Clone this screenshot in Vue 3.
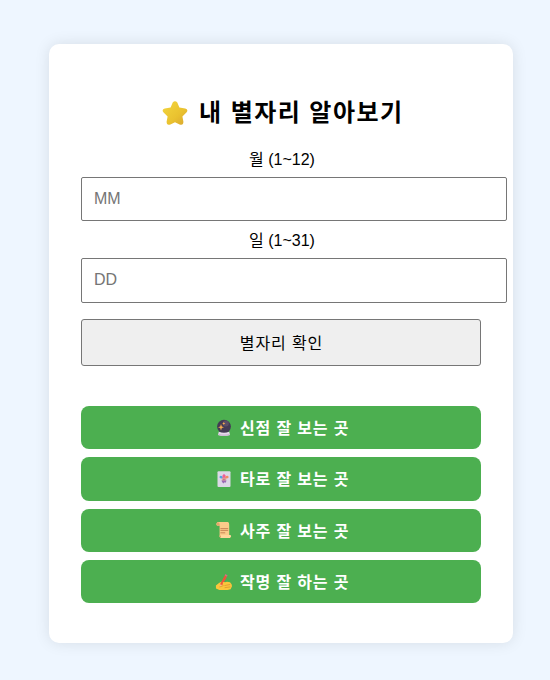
<template>
  <main class="page">
    <section class="card">
      <h2 class="title">
        <svg class="star" viewBox="0 0 26 26" aria-hidden="true">
          <defs>
            <linearGradient id="gold" x1="0" y1="0" x2="1" y2="1">
              <stop offset="0" stop-color="#f3d63f" />
              <stop offset="0.6" stop-color="#eac22f" />
              <stop offset="1" stop-color="#d8a52f" />
            </linearGradient>
          </defs>
          <path d="M10.7 2.6Q13 -.2 15.3 2.6L17.4 7.6L23.2 8.5Q26.8 9.6 24.4 12.6L20.4 16.4L21.4 21.8Q21.4 25.9 17.6 24.5L13 22.3L8.4 24.5Q4.6 25.9 4.6 21.8L5.6 16.4L1.6 12.6Q-.8 9.6 2.8 8.5L8.6 7.6Z" fill="url(#gold)" />
        </svg>
        <span>내 별자리 알아보기</span>
      </h2>

      <label class="label" for="month">월 (1~12)</label>
      <input id="month" v-model="month" class="field" type="text" placeholder="MM" />
      <label class="label second" for="day">일 (1~31)</label>
      <input id="day" v-model="day" class="field tall" type="text" placeholder="DD" />
      <button class="submit" type="button">별자리 확인</button>

      <nav class="links">
        <a v-for="item in links" :key="item.icon" class="link" href="#">
          <svg class="icon" viewBox="0 0 18 18" aria-hidden="true">
            <g v-if="item.icon === 'crystal'">
              <circle cx="9" cy="7.6" r="6.9" fill="#443b55" />
              <circle cx="10.8" cy="4.5" r="3" fill="#65576f" opacity=".7" />
              <path d="M3.8 12.8Q9 14.6 14.2 12.8L15 16Q9 17.8 3 16Z" fill="#e6d9ea" />
              <path d="M3.3 14.8Q9 16.4 14.7 14.8L15 16Q9 17.8 3 16Z" fill="#cfbdd6" />
              <path d="M6 5L6.8 7.5L9 8.2L6.8 8.9L6 11.6L5.2 8.9L3 8.2L5.2 7.5ZM8.8 3L9.3 4L10.4 4.5L9.3 5L8.8 6L8.3 5L7.2 4.5L8.3 4Z" fill="#f9ac4e" />
            </g>
            <g v-else-if="item.icon === 'joker'">
              <rect x="2.5" y="1.2" width="13" height="15.8" rx="1" fill="#dcd8e6" />
              <path d="M4.3 7.2Q5 4.6 7.4 6.3L8 8.6H5.8Z" fill="#4fa6df" />
              <path d="M7.2 8.4L7.8 5.2L9 3.8L10.3 5.2L10.8 8.4Z" fill="#ee5f98" />
              <path d="M10.5 6.3Q13 4.8 13.8 7.2L12.2 8.6H10Z" fill="#f28b62" />
              <circle cx="9" cy="9.6" r="2.2" fill="#e79c9c" />
              <path d="M6.4 10.4H11.6L10.6 12.8L9.4 12.2L8.7 13.5L7.4 12.4Z" fill="#9a6bb5" />
              <path d="M8.1 9.3H8.7M9.5 9.3H10.1" stroke="#704760" stroke-width=".7" />
            </g>
            <g v-else-if="item.icon === 'scroll'">
              <path d="M2.6 1H13Q14.4 1.3 14.2 4V14H4.6V4.8H2.2Q.2 3 2.6 1Z" fill="#fbcb8a" />
              <path d="M2.4 1.3Q4.6 1.1 4.6 3.3V4.8H2.2Q.6 3 2.4 1.3Z" fill="#e5a66c" />
              <path d="M4.6 14H15.6Q17 15.6 15 17H5.6Q3.6 15.7 4.6 14Z" fill="#ffd79b" />
              <path d="M5 14.1Q6.8 15 5.4 16.8Q3.6 15.7 5 14.1Z" fill="#dc9a62" />
              <path d="M5.4 7.6H13.2M5.4 9.4H13.2M5.4 11.8H10.2" stroke="#c47e51" stroke-width=".9" />
            </g>
            <g v-else>
              <path d="M.9 12.6L4 10L6.4 8.8L9 9.5L12 8.7L15 9.2Q17.2 11 17 13.3L15.6 16.2L12.4 17H4.4L1 15.6Z" fill="#fbc63c" />
              <path d="M9.4 12.6L15.2 11.5M9.6 14.7L15.4 13.9M4.4 14L8.6 12.6" stroke="#dc9630" stroke-width=".8" />
              <path d="M9.7 2.4L11.9 3.7L7.7 11.6L5.2 13.6L5.5 10.4Z" fill="#ef553b" />
              <path d="M9.7 2.4L10.4 1.1L12.6 2.4L11.9 3.7Z" fill="#dd6a80" />
              <path d="M5.4 11.6L7.1 12.1L5.2 13.6Z" fill="#ffe0a1" />
              <path d="M7.8 9.2Q10.4 8.6 10.2 10.6L7.8 12.4Z" fill="#fbc63c" />
            </g>
          </svg>
          <span class="link-text">{{ item.text }}</span>
        </a>
      </nav>
    </section>
  </main>
</template>

<script setup>
import { ref } from 'vue'

const month = ref('')
const day = ref('')
const links = [
  { icon: 'crystal', text: '신점 잘 보는 곳' },
  { icon: 'joker', text: '타로 잘 보는 곳' },
  { icon: 'scroll', text: '사주 잘 보는 곳' },
  { icon: 'writing', text: '작명 잘 하는 곳' }
]
</script>

<style>
body {
  margin: 0;
  background: #eef6ff;
}
</style>

<style scoped>
.page {
  box-sizing: border-box;
  height: 680px;
  padding: 44px 37px 37px 49px;
  font-family: "Liberation Sans", "Noto Sans CJK KR", sans-serif;
  color: #000;
}
.card {
  box-sizing: border-box;
  width: 464px;
  height: 599px;
  padding: 52px 32px 40px;
  border-radius: 10px;
  background: #fff;
  box-shadow: 0 0 15px rgba(0, 0, 0, 0.1);
}
.title {
  display: flex;
  align-items: center;
  height: 34px;
  margin: 0 0 17px;
  padding-left: 81px;
  font-size: 24px;
  line-height: 34px;
  letter-spacing: 1.45px;
  white-space: nowrap;
}
.star {
  width: 26px;
  height: 26px;
  margin-right: 11px;
}
.label {
  display: block;
  height: 25px;
  margin-bottom: 5px;
  padding-left: 2px;
  font-size: 16px;
  line-height: 25px;
  text-align: center;
}
.second {
  margin-top: 7px;
}
.field {
  display: block;
  box-sizing: border-box;
  width: 426px;
  height: 44px;
  padding: 0 12px;
  border: 1px solid #767676;
  border-radius: 2px;
  outline: 0;
  background: #fff;
  font: 16px "Liberation Sans", sans-serif;
}
.field::placeholder {
  color: #757575;
}
.tall {
  height: 45px;
  padding-bottom: 2px;
}
.submit {
  display: block;
  box-sizing: border-box;
  width: 400px;
  height: 47px;
  margin: 16px 0 40px;
  padding: 0 0 2px 1px;
  border: 1px solid #767676;
  border-radius: 3px;
  background: #efefef;
  color: #000;
  font: 16px "Liberation Sans", "Noto Sans CJK KR", sans-serif;
  letter-spacing: 0.9px;
}
.links {
  display: flex;
  flex-direction: column;
  gap: 8px;
}
.link {
  display: flex;
  align-items: center;
  box-sizing: border-box;
  height: 43.33px;
  padding-left: 134px;
  border-radius: 8px;
  background: #4caf50;
  color: #fff;
  font-size: 16px;
  font-weight: 700;
  letter-spacing: 0.85px;
  text-decoration: none;
  white-space: nowrap;
}
.link-text {
  padding-bottom: 1px;
}
.icon {
  width: 18px;
  height: 18px;
  margin-right: 7px;
}
</style>
